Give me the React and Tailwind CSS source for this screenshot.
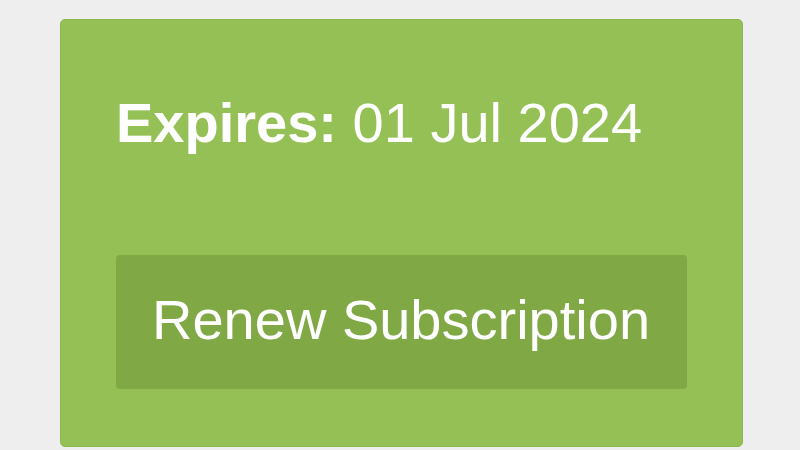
function App() {
  return (
    <div
      className="w-[800px] h-[450px] bg-[#eeeeee] overflow-hidden pt-[19px] pl-[60px]"
      style={{ fontFamily: '"Liberation Sans", Arial, sans-serif' }}
    >
      <div className="w-[683px] h-[428px] bg-[#95c055] rounded-[5px] border border-[#8ab84c] pt-[71px] px-[55px] text-white">
        <p className="text-[56px] leading-[64px] whitespace-nowrap">
          <span className="font-bold">Expires:</span> 01 Jul 2024
        </p>

        <button className="mt-[100px] w-[571px] h-[134px] bg-[#80a845] rounded-[4px] text-left pl-[36px] pt-[33px] pb-[37px] text-[56px] leading-[64px] whitespace-nowrap">
          Renew Subscription
        </button>
      </div>
    </div>
  );
}

export default App;
